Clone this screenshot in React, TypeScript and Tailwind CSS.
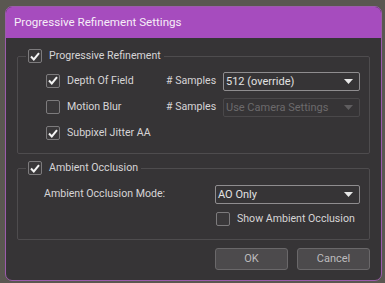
import React from "react";

const font = { fontFamily: 'Roboto, "Noto Sans", Arial, sans-serif' };

type CheckProps = { checked?: boolean };

const Check: React.FC<CheckProps> = ({ checked }) => (
  <span className="flex h-[14px] w-[14px] shrink-0 items-center justify-center rounded-[2px] border border-[#7d7b7d] bg-[#3a383a]">
    {checked && (
      <svg width="10" height="9" viewBox="0 0 10 9">
        <path d="M1 4.5 L3.8 7.5 L9 1.2" fill="none" stroke="#f4f4f4" strokeWidth="2" />
      </svg>
    )}
  </span>
);

type SelectProps = { value: string; disabled?: boolean; width: string };

const Select: React.FC<SelectProps> = ({ value, disabled, width }) => (
  <div
    className={`${width} flex h-[19px] shrink-0 items-center justify-between rounded-[2px] border pl-[2px] pr-[6px] text-[11px] ${
      disabled
        ? "border-[#4a484a] text-[#6c6a6c]"
        : "border-[#8f8d8f] text-[#e2e2e2]"
    }`}
  >
    <span className="leading-none whitespace-nowrap">{value}</span>
    <svg width="9" height="5" viewBox="0 0 9 5">
      <path d="M0 0 H9 L4.5 5 Z" fill={disabled ? "#5f5d5f" : "#e8e8e8"} />
    </svg>
  </div>
);

const App: React.FC = () => {
  return (
    <div className="h-[283px] w-[385px] bg-[#5a5751] pl-[5px] pt-[6px]" style={font}>
      <div className="flex h-[275px] w-[377px] flex-col overflow-hidden rounded-[7px] border border-[#9b5cab] bg-[#363436]">
        <div className="flex h-[31px] shrink-0 items-center bg-[#a64cbe] pl-[8px] text-[11.6px] text-[#f6eef8]">
          Progressive Refinement Settings
        </div>

        <div className="flex flex-col whitespace-nowrap px-[11px] pt-[11px] text-[10.6px] text-[#d6d4d6]">
          <fieldset className="h-[105px] min-w-0 rounded-[2px] border border-[#4e4c4e] p-0">
            <legend className="ml-[8px] flex h-[14px] items-center gap-[7px] px-[2px]">
              <Check checked />
              <span className="pr-[1px] leading-none">Progressive Refinement</span>
            </legend>
            <div className="pl-[28px]">
              <div className="mt-[8px] flex h-[20px] items-center">
                <div className="flex w-[120px] items-center gap-[7px]">
                  <Check checked />
                  <span>Depth Of Field</span>
                </div>
                <span className="w-[57px]"># Samples</span>
                <Select value="512 (override)" width="w-[137px]" />
              </div>
              <div className="mt-[6px] flex h-[20px] items-center">
                <div className="flex w-[120px] items-center gap-[7px]">
                  <Check />
                  <span>Motion Blur</span>
                </div>
                <span className="w-[57px]"># Samples</span>
                <Select value="Use Camera Settings" width="w-[137px]" disabled />
              </div>
              <div className="mt-[6px] flex h-[20px] items-center gap-[7px]">
                <Check checked />
                <span>Subpixel Jitter AA</span>
              </div>
            </div>
          </fieldset>

          <fieldset className="mt-[7px] h-[79px] min-w-0 rounded-[2px] border border-[#4e4c4e] p-0">
            <legend className="ml-[8px] flex h-[14px] items-center gap-[7px] px-[2px]">
              <Check checked />
              <span className="pr-[1px] leading-none">Ambient Occlusion</span>
            </legend>
            <div className="pl-[26px]">
              <div className="mt-[9px] flex h-[20px] items-center">
                <span className="w-[171px]">Ambient Occlusion Mode:</span>
                <Select value="AO Only" width="w-[145px]" />
              </div>
              <div className="mt-[7px] flex h-[16px] items-center gap-[7px] pl-[172px]">
                <Check />
                <span>Show Ambient Occlusion</span>
              </div>
            </div>
          </fieldset>

          <div className="mt-[8px] flex justify-end gap-[9px]">
            <button className="h-[22px] w-[73px] rounded-[3px] border border-[#6a686a] bg-[#4c4a4c] text-[11px] text-[#bdbbbd]">
              OK
            </button>
            <button className="h-[22px] w-[73px] rounded-[3px] border border-[#6a686a] bg-[#4c4a4c] text-[11px] text-[#bdbbbd]">
              Cancel
            </button>
          </div>
        </div>
      </div>
    </div>
  );
};

export default App;
